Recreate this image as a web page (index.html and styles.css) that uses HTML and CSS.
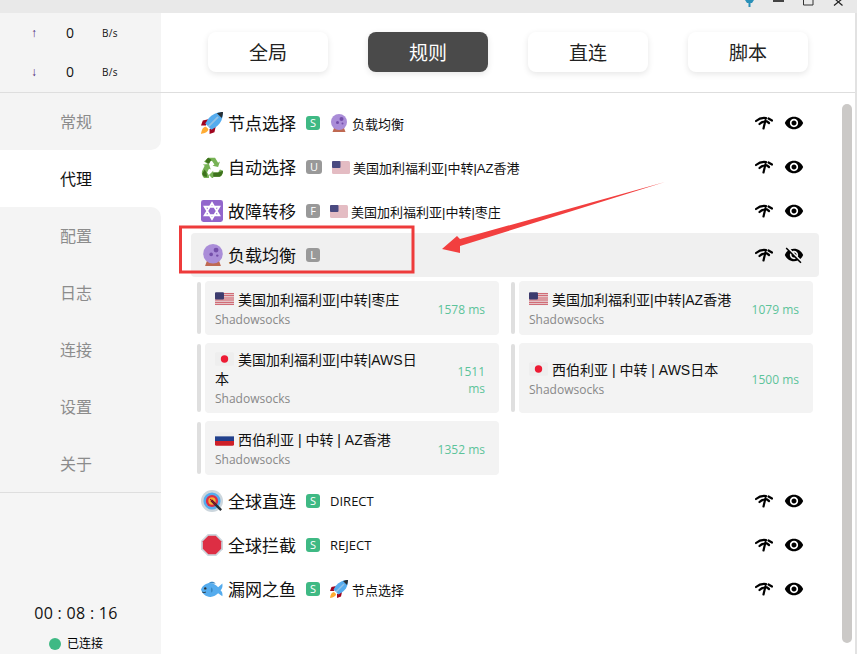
FILE: index.html
```html
<!DOCTYPE html>
<html lang="zh">
<head>
<meta charset="utf-8">
<title>代理</title>
<link rel="stylesheet" href="styles.css">
</head>
<body>
<svg class="defs" width="0" height="0">
  <symbol id="rocket" viewBox="0 0 36 36">
    <path fill="#a0041e" d="M12 12 3 14 0 22 8 22ZM24 24 22 33 14 36 14 28Z"/>
    <path fill="#ffac33" d="M8 24c-4 0-7 4-8 12 7-1 12-4 12-8z"/>
    <path fill="#55acee" d="M36 0C26 0 18 4 12 11l-5 8 10 10 8-5C33 18 36 10 36 0Z"/>
    <path fill="#ccd6dd" d="M11 23 27 7l2 2L13 25Z" opacity=".55"/>
    <path fill="#292f33" d="M36 0c-3 0-7 1-10 2l8 8c1-3 2-7 2-10Z"/>
  </symbol>
  <symbol id="recycle" viewBox="0 0 36 36">
    <path fill="#77b255" d="M12 3h11l5 8 3-2-3 9-9-2 3-2-4-6h-4l-3 5-6-4zM2 24l4-8-3-2 10-1 3 9-3-1-3 6 3 5v5H7c-4-1-7-8-5-13zM20 27h8l3-5 5 2c0 6-3 10-7 10h-9v4l-7-7 7-7z"/>
    <path fill="#3e721d" d="M12 3c-2 1-3 3-5 6l6 4 4-7zM7 34c-2 0-4-2-5-5l4-7 3 5 1 7zM29 34l-9 0v-7h8l8-3c0 5-3 10-7 10z"/>
  </symbol>
  <symbol id="star" viewBox="0 0 36 36">
    <rect width="36" height="36" rx="4" fill="#9266cc"/>
    <path fill="none" stroke="#fff" stroke-width="3" d="M18 5 30 25H6ZM18 31 6 11H30Z"/>
  </symbol>
  <symbol id="ball" viewBox="0 0 36 36">
    <path fill="#bf6952" d="M8 28h20l3 8H5z"/>
    <circle cx="18" cy="16" r="16" fill="#aa8dd8"/>
    <circle cx="23" cy="10" r="4" fill="#744eaa"/>
    <circle cx="15" cy="17" r="3" fill="#744eaa"/>
    <circle cx="25" cy="19" r="2" fill="#744eaa"/>
  </symbol>
  <symbol id="target" viewBox="0 0 36 36">
    <circle cx="18" cy="18" r="18" fill="#ccd6dd"/>
    <circle cx="18" cy="18" r="14" fill="#55acee"/>
    <circle cx="18" cy="18" r="10" fill="#dd2e44"/>
    <circle cx="18" cy="18" r="6" fill="#ffac33"/>
    <path stroke="#292f33" stroke-width="4" d="M17 17 33 33"/>
    <path stroke="#a0041e" stroke-width="2" d="M15 15 24 24"/>
  </symbol>
  <symbol id="stop" viewBox="0 0 36 36">
    <path fill="#ccd6dd" d="M11 0h14l11 11v14L25 36H11L0 25V11Z"/>
    <path fill="#dd2e44" d="M12 3h12l9 9v12l-9 9H12l-9-9V12Z"/>
  </symbol>
  <symbol id="fish" viewBox="0 0 36 36">
    <path fill="#3b88c3" d="M12 9c3-4 9-4 12 0ZM13 26l2 5 5-4Z"/>
    <path fill="#55acee" d="M0 19c2-7 9-11 15-11 6 0 10 4 13 7l7-6c1 6-1 9-3 11 2 2 4 5 3 10l-7-5c-3 3-7 6-13 6C8 31 2 26 0 19Z"/>
    <circle cx="7" cy="17" r="2" fill="#292f33"/>
    <path fill="none" stroke="#292f33" stroke-width="1.500" d="M2 23c2 1 4 1 6 0"/>
    <path fill="#3b88c3" d="M17 15c3 2 3 7 0 9-1-3-1-6 0-9Z"/>
  </symbol>
  <symbol id="us" viewBox="0 0 36 26">
    <rect width="36" height="26" rx="3" fill="#eee"/>
    <path fill="#c8424f" d="M0 2h36v2H0zM0 6h36v2H0zM0 10h36v2H0zM0 14h36v2H0zM0 18h36v2H0zM0 22h36v2H0z"/>
    <rect width="17" height="14" rx="2" fill="#3c3b6e"/>
  </symbol>
  <symbol id="us-small" viewBox="0 0 36 26">
    <rect width="36" height="26" rx="3" fill="#e4bcc3"/>
    <rect width="17" height="14" rx="2" fill="#4a4a80"/>
  </symbol>
  <symbol id="jp" viewBox="0 0 36 26">
    <rect width="36" height="26" rx="3" fill="#eee"/>
    <circle cx="18" cy="13" r="7" fill="#ed1b34"/>
  </symbol>
  <symbol id="ru" viewBox="0 0 36 26">
    <rect width="36" height="26" rx="3" fill="#eee"/>
    <rect y="8" width="36" height="9" fill="#22408c"/>
    <path fill="#ce2028" d="M0 17h36v6a3 3 0 0 1-3 3H3a3 3 0 0 1-3-3Z"/>
  </symbol>
  <symbol id="wifi" viewBox="0 0 18 14">
    <path fill="none" stroke="#000" stroke-width="2.200" stroke-linecap="round" d="M1 5C4 2.500 8 1.500 11 2M13.500 2.500 17 4.500M4.500 8C6 6.500 8 5.500 10 5.500M12 5.500 14 7M10.500 4 8.500 12.500"/>
  </symbol>
  <symbol id="eye" viewBox="0 0 24 24">
    <path d="M12 4.500C7 4.500 2.730 7.610 1 12c1.730 4.390 6 7.500 11 7.500s9.270-3.110 11-7.500c-1.730-4.390-6-7.500-11-7.500zM12 17c-2.760 0-5-2.240-5-5s2.240-5 5-5 5 2.240 5 5-2.240 5-5 5zm0-8c-1.660 0-3 1.340-3 3s1.340 3 3 3 3-1.340 3-3-1.340-3-3-3z"/>
  </symbol>
  <symbol id="eye-off" viewBox="0 0 24 24">
    <path d="M12 7c2.760 0 5 2.240 5 5 0 .650-.130 1.260-.360 1.830l2.920 2.920c1.510-1.260 2.700-2.890 3.430-4.750-1.730-4.390-6-7.500-11-7.500-1.400 0-2.740.250-3.980.700l2.160 2.160C10.740 7.130 11.350 7 12 7zM2 4.270l2.280 2.280.460.460C3.080 8.300 1.780 10.020 1 12c1.730 4.390 6 7.500 11 7.500 1.550 0 3.030-.300 4.380-.840l.420.420L19.730 22 21 20.730 3.270 3 2 4.270zM7.530 9.800l1.550 1.550c-.050.210-.080.430-.080.650 0 1.660 1.340 3 3 3 .220 0 .440-.030.650-.080l1.550 1.550c-.670.330-1.410.530-2.200.530-2.760 0-5-2.240-5-5 0-.790.200-1.530.530-2.200zm4.310-.780 3.150 3.150.020-.160c0-1.660-1.340-3-3-3l-.170.010z"/>
  </symbol>
</svg>

<div class="titlebar">
  <svg class="win-icon win-pin" viewBox="0 0 11 13"><path fill="#2a90b8" d="M1 0h9L8 3H6.500v4h-2V3H3Z"/></svg>
  <svg class="win-icon win-min" viewBox="0 0 11 13"><rect width="11" height="2" fill="#444"/></svg>
  <svg class="win-icon win-max" viewBox="0 0 11 13"><path fill="none" stroke="#333" stroke-width="1" d="M.5-3h9.500v8H.5Z"/></svg>
  <svg class="win-icon win-close" viewBox="0 0 11 13"><path fill="none" stroke="#222" stroke-width="1.200" d="M2-1 9.500 5.500M9-1 1 5.500"/></svg>
</div>

<div class="main">
  <aside class="sidebar">
    <div class="traffic">
      <div class="traffic-row"><span class="arrow">↑</span><span class="num">0</span><span class="unit">B/s</span></div>
      <div class="traffic-row"><span class="arrow">↓</span><span class="num">0</span><span class="unit">B/s</span></div>
    </div>
    <nav class="menu">
      <a class="menu-item before-active">常规</a>
      <a class="menu-item active">代理</a>
      <a class="menu-item after-active">配置</a>
      <a class="menu-item">日志</a>
      <a class="menu-item">连接</a>
      <a class="menu-item">设置</a>
      <a class="menu-item">关于</a>
    </nav>
    <div class="status">
      <div class="clock">00 : 08 : 16</div>
      <div class="connected"><span class="dot"></span>已连接</div>
    </div>
  </aside>

  <section class="content">
    <header class="tabs">
      <button class="tab">全局</button>
      <button class="tab selected">规则</button>
      <button class="tab">直连</button>
      <button class="tab">脚本</button>
    </header>
    <div class="body">
      <div class="list">
        <div class="row">
          <svg class="emoji"><use href="#rocket"/></svg><span class="name">节点选择</span><span class="badge">S</span>
          <span class="sub"><svg class="sub-emoji"><use href="#ball"/></svg>负载均衡</span>
          <span class="actions"><svg class="act"><use href="#wifi"/></svg><svg class="act-eye"><use href="#eye"/></svg></span>
        </div>
        <div class="row">
          <svg class="emoji"><use href="#recycle"/></svg><span class="name">自动选择</span><span class="badge grey">U</span>
          <span class="sub node"><svg class="sub-flag"><use href="#us-small"/></svg>美国加利福利亚|中转|AZ香港</span>
          <span class="actions"><svg class="act"><use href="#wifi"/></svg><svg class="act-eye"><use href="#eye"/></svg></span>
        </div>
        <div class="row">
          <svg class="emoji"><use href="#star"/></svg><span class="name">故障转移</span><span class="badge grey">F</span>
          <span class="sub node"><svg class="sub-flag"><use href="#us-small"/></svg>美国加利福利亚|中转|枣庄</span>
          <span class="actions"><svg class="act"><use href="#wifi"/></svg><svg class="act-eye"><use href="#eye"/></svg></span>
        </div>
        <div class="row open">
          <svg class="emoji"><use href="#ball"/></svg><span class="name">负载均衡</span><span class="badge grey">L</span>
          <span class="actions"><svg class="act"><use href="#wifi"/></svg><svg class="act-eye"><use href="#eye-off"/></svg></span>
        </div>

        <div class="cards">
          <div class="card"><i class="bar"></i><div class="card-body">
            <div class="card-text"><div class="card-title"><svg class="flag"><use href="#us"/></svg>美国加利福利亚|中转|枣庄</div><div class="card-type">Shadowsocks</div></div>
            <div class="ms">1578 ms</div>
          </div></div>
          <div class="card"><i class="bar"></i><div class="card-body">
            <div class="card-text"><div class="card-title"><svg class="flag"><use href="#us"/></svg>美国加利福利亚|中转|AZ香港</div><div class="card-type">Shadowsocks</div></div>
            <div class="ms">1079 ms</div>
          </div></div>
          <div class="card"><i class="bar"></i><div class="card-body">
            <div class="card-text narrow"><div class="card-title"><svg class="flag"><use href="#jp"/></svg>美国加利福利亚|中转|AWS日本</div><div class="card-type">Shadowsocks</div></div>
            <div class="ms wrap">1511 ms</div>
          </div></div>
          <div class="card"><i class="bar"></i><div class="card-body">
            <div class="card-text"><div class="card-title"><svg class="flag"><use href="#jp"/></svg>西伯利亚 | 中转 | AWS日本</div><div class="card-type">Shadowsocks</div></div>
            <div class="ms">1500 ms</div>
          </div></div>
          <div class="card"><i class="bar"></i><div class="card-body">
            <div class="card-text"><div class="card-title"><svg class="flag"><use href="#ru"/></svg>西伯利亚 | 中转 | AZ香港</div><div class="card-type">Shadowsocks</div></div>
            <div class="ms">1352 ms</div>
          </div></div>
        </div>

        <div class="row">
          <svg class="emoji"><use href="#target"/></svg><span class="name">全球直连</span><span class="badge">S</span>
          <span class="sub">DIRECT</span>
          <span class="actions"><svg class="act"><use href="#wifi"/></svg><svg class="act-eye"><use href="#eye"/></svg></span>
        </div>
        <div class="row">
          <svg class="emoji"><use href="#stop"/></svg><span class="name">全球拦截</span><span class="badge">S</span>
          <span class="sub">REJECT</span>
          <span class="actions"><svg class="act"><use href="#wifi"/></svg><svg class="act-eye"><use href="#eye"/></svg></span>
        </div>
        <div class="row">
          <svg class="emoji"><use href="#fish"/></svg><span class="name">漏网之鱼</span><span class="badge">S</span>
          <span class="sub"><svg class="sub-emoji"><use href="#rocket"/></svg>节点选择</span>
          <span class="actions"><svg class="act"><use href="#wifi"/></svg><svg class="act-eye"><use href="#eye"/></svg></span>
        </div>
      </div>
      <div class="scrollbar"></div>
    </div>
  </section>
</div>

<svg class="annotation" viewBox="0 0 857 654" width="857" height="654">
  <rect class="anno-box" x="180.500" y="227" width="232.500" height="45"/>
  <path class="anno-arrow" d="M665 182 460 239 457 236 442 249 460 253 460 246 Z"/>
</svg>
</body>
</html>
```

FILE: styles.css
```css
* { box-sizing: border-box; }
html, body { margin: 0; padding: 0; }
body {
  width: 857px;
  height: 654px;
  overflow: hidden;
  position: relative;
  display: flex;
  flex-direction: column;
  background: #fff;
  color: #000;
  font-family: "Open Sans", "Noto Sans CJK SC", "Liberation Sans", sans-serif;
}
.defs { position: absolute; }

.titlebar {
  height: 13px;
  flex: none;
  background: #e9e9e9;
  display: flex;
  padding-left: 744px;
  overflow: hidden;
}
.win-icon { width: 11px; height: 13px; flex: none; overflow: hidden; }
.win-min { margin-left: 18px; }
.win-max { margin-left: 19px; }
.win-close { margin-left: 19px; }

.main { flex: 1; display: flex; min-height: 0; }

.sidebar {
  width: 161px;
  flex: none;
  display: flex;
  flex-direction: column;
  background: #f5f5f5;
}
.traffic {
  height: 80px;
  border-bottom: 1px solid #dedede;
  background: #f4f4f4;
  display: flex;
  flex-direction: column;
}
.traffic-row {
  height: 39px;
  display: flex;
  align-items: center;
  padding-left: 31px;
}
.arrow { width: 26px; font-family: "Liberation Sans", sans-serif; font-size: 12px; color: #4b1e78; }
.num { width: 45px; padding-left: 9px; font-size: 14px; color: #111; }
.unit { font-size: 10px; color: #111; letter-spacing: .3px; }

.menu {
  background: #fff;
  display: flex;
  flex-direction: column;
  border-bottom: 1px solid #dedede;
}
.menu-item {
  height: 57px;
  display: flex;
  align-items: center;
  justify-content: center;
  padding: 0 9px 1px 0;
  background: #f4f4f4;
  color: #8c8c8c;
  font-size: 16px;
}
.menu-item.active { background: #fff; color: #111; }
.before-active { border-bottom-right-radius: 10px; }
.after-active { border-top-right-radius: 10px; }

.status {
  flex: 1;
  display: flex;
  flex-direction: column;
  justify-content: flex-end;
  align-items: center;
  padding-right: 9px;
}
.clock { font-size: 16px; line-height: 22px; color: #111; margin-bottom: 12px; letter-spacing: .3px; }
.connected {
  display: flex;
  align-items: center;
  gap: 6px;
  font-size: 12px;
  line-height: 16px;
  margin-bottom: 2px;
}
.dot { width: 12px; height: 12px; border-radius: 50%; background: #3fb984; }

.content {
  flex: 1;
  min-width: 0;
  display: flex;
  flex-direction: column;
  border-right: 2px solid #e2e2e2;
}
.tabs {
  height: 80px;
  flex: none;
  display: flex;
  align-items: center;
  gap: 40px;
  padding-left: 47px;
  padding-bottom: 1px;
  border-bottom: 1px solid #dedede;
}
.tab {
  width: 120px;
  height: 40px;
  border: 0;
  border-radius: 8px;
  background: #fff;
  box-shadow: 0 2px 6px rgba(0, 0, 0, .1);
  font: inherit;
  font-size: 19px;
  color: #222;
  padding: 0;
}
.tab.selected { background: #4a4a4a; color: #fff; }

.body { flex: 1; min-height: 0; display: flex; }
.list {
  width: 658px;
  flex: none;
  padding: 8px 0 0 30px;
}
.row {
  width: 628px;
  height: 44px;
  display: flex;
  align-items: center;
  padding: 0 15px 0 10px;
  border-radius: 4px;
}
.row.open { background: #f0f0f0; }
.emoji { width: 22px; height: 22px; flex: none; margin-right: 5px; }
.row.open .emoji { margin-left: 1px; margin-right: 4px; }
.name { font-size: 17px; line-height: 24px; padding-top: 2px; color: #111; white-space: nowrap; }
.badge {
  margin-left: 10px;
  min-width: 14px;
  height: 14px;
  padding: 0 4px;
  border-radius: 3px;
  background: #3fb984;
  color: #fff;
  font-size: 11px;
  line-height: 14px;
  text-align: center;
  flex: none;
}
.badge.grey { background: #999; }
.sub {
  margin-left: 10px;
  display: flex;
  align-items: center;
  font-size: 13px;
  color: #111;
  white-space: nowrap;
}
.sub.node { font-family: "Liberation Sans", "Noto Sans CJK SC", sans-serif; }
.sub-emoji { width: 18px; height: 18px; margin-right: 4px; }
.sub-flag { width: 18px; height: 13px; margin-right: 3px; }
.actions { margin-left: auto; display: flex; gap: 11px; align-items: center; }
.act { width: 18px; height: 18px; display: block; }
.act-eye { width: 20px; height: 20px; display: block; }

.cards {
  margin: 4px 0;
  padding-left: 6px;
  width: 622px;
  display: grid;
  grid-template-columns: 302px 302px;
  gap: 8px 12px;
}
.card { display: flex; gap: 4px; min-width: 0; }
.bar { width: 4px; flex: none; margin: 1px 0; border-radius: 2px; background: #dfdfdf; }
.card-body {
  flex: 1;
  min-width: 0;
  min-height: 54px;
  display: flex;
  align-items: center;
  justify-content: space-between;
  gap: 8px;
  padding: 8px 14px 5px 10px;
  border-radius: 4px;
  background: #f3f3f3;
}
.card-text { min-width: 0; }
.card-text.narrow { max-width: 210px; }
.card-title {
  font-family: "Liberation Sans", "Noto Sans CJK SC", sans-serif;
  font-size: 14px;
  line-height: 19px;
  color: #111;
}
.flag { width: 19px; height: 14px; margin-right: 4px; vertical-align: -1px; }
.card-type { font-size: 12px; line-height: 19px; color: #888; }
.ms {
  flex: none;
  font-size: 12px;
  line-height: 17px;
  color: #5cc39a;
  text-align: right;
  white-space: nowrap;
}
.ms.wrap { white-space: normal; width: 28px; }

.scrollbar {
  width: 10px;
  height: 539px;
  margin: 11px 0 0 23px;
  border-radius: 5px;
  background: #cbc9c7;
}

.annotation { position: absolute; left: 0; top: 0; pointer-events: none; }
.anno-box { fill: none; stroke: #ee3b3b; stroke-width: 3; }
.anno-arrow { fill: #f23f3f; }
```
